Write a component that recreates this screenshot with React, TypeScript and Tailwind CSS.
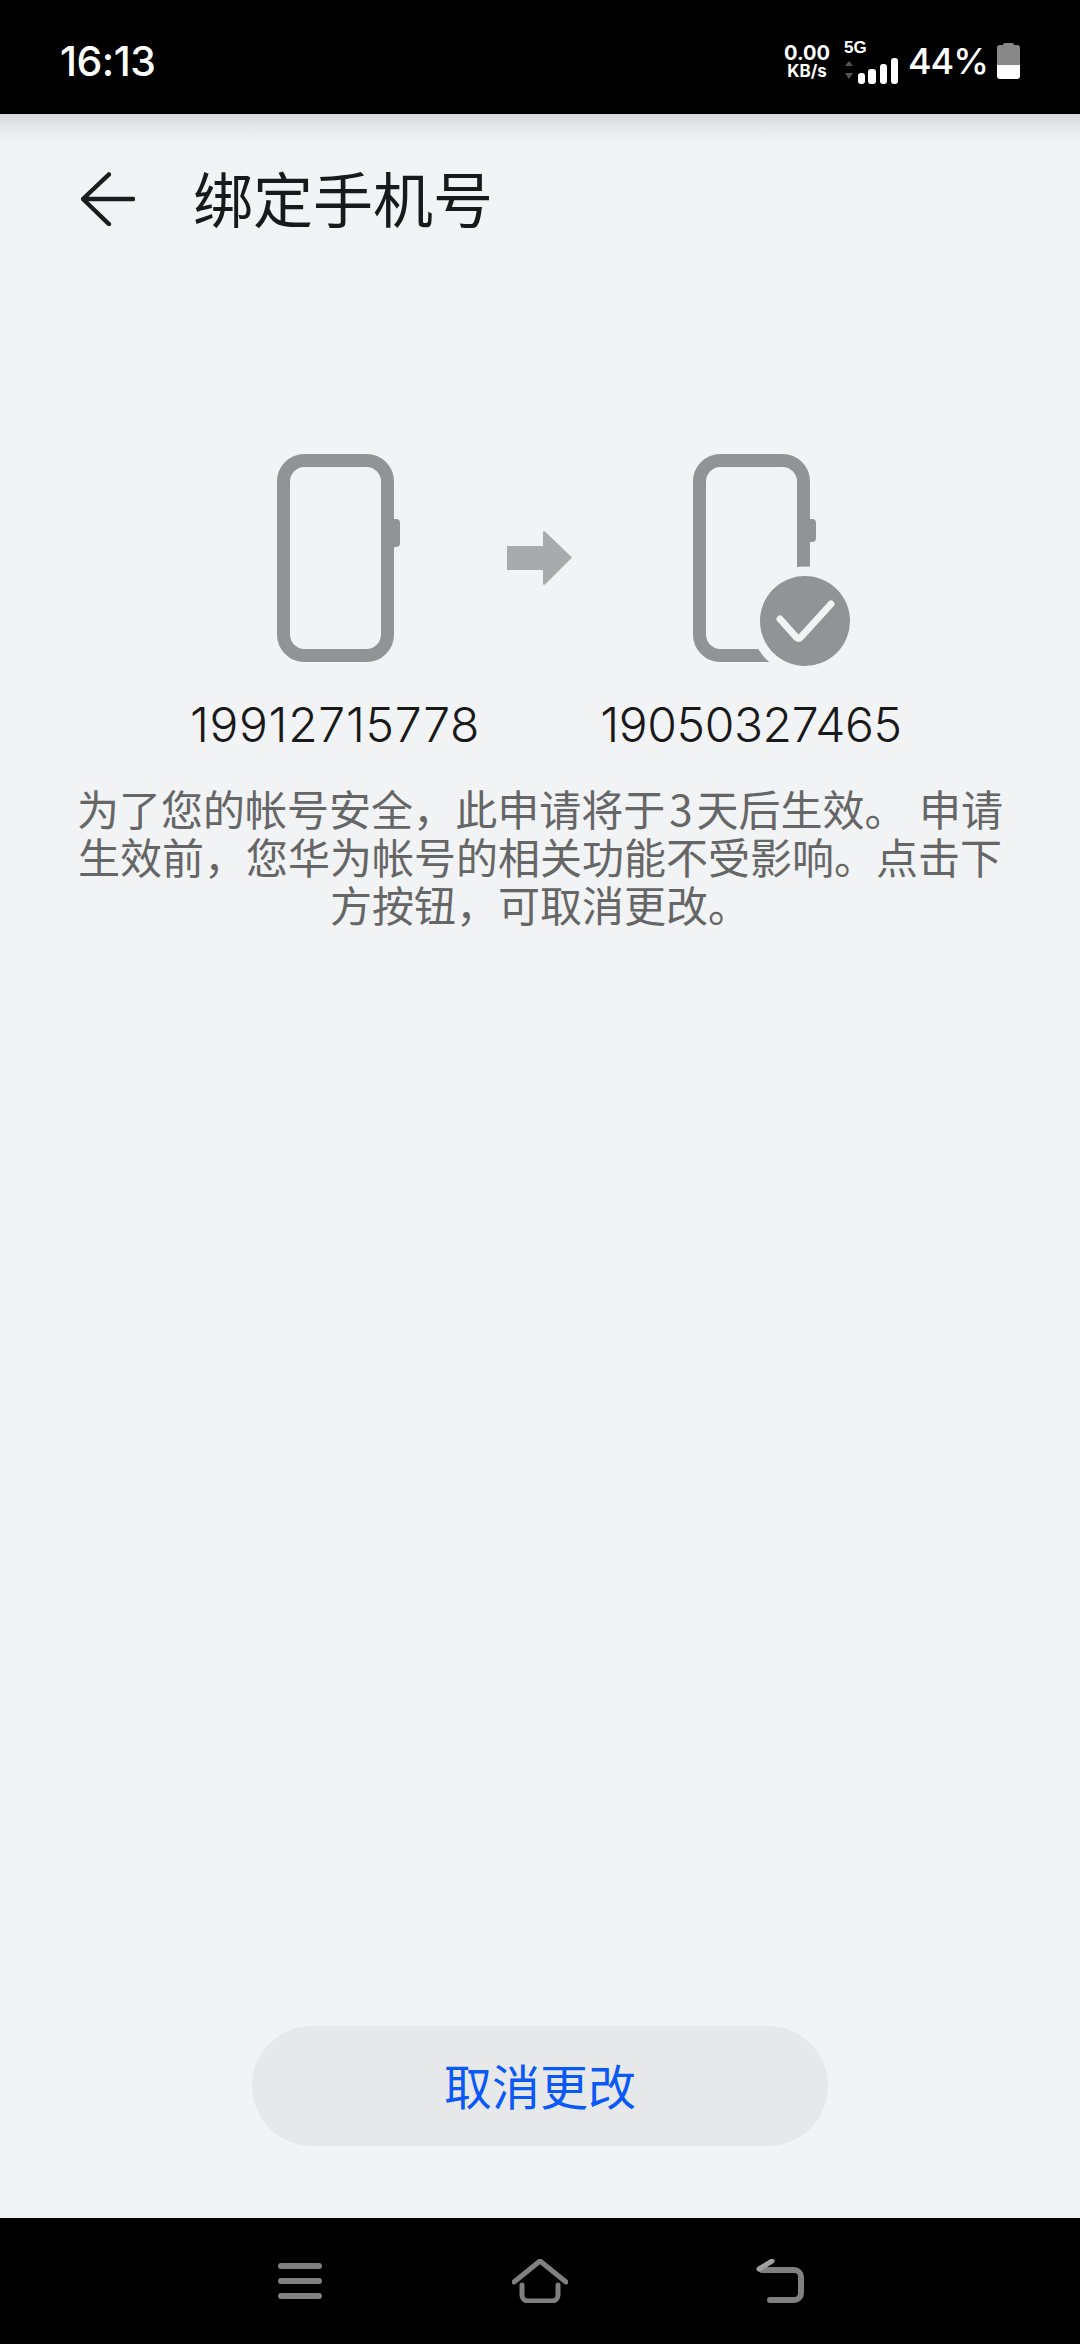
const PhoneIcon = ({ done }: { done?: boolean }) => (
  <svg width="220" height="212" viewBox="0 0 220 212" fill="none">
    <rect x="58.5" y="6.5" width="104" height="195" rx="21" stroke="#929394" strokeWidth="13" />
    {done ? (
      <>
        <path d="M168 65h3a4 4 0 0 1 4 4v15a4 4 0 0 1-4 4h-3z" fill="#929394" />
        <circle cx="164" cy="167" r="54.5" fill="#f1f3f5" />
        <circle cx="164" cy="167" r="45" fill="#929394" />
        <path d="M139 165l16.5 18.5a2.5 2.5 0 0 0 4 0L190 150" stroke="#f1f3f5" strokeWidth="7" strokeLinecap="round" strokeLinejoin="round" />
      </>
    ) : (
      <path d="M168 65h3a4 4 0 0 1 4 4v20a4 4 0 0 1-4 4h-3z" fill="#929394" />
    )}
  </svg>
);

const StatusBar = () => (
  <div className="flex h-[114px] shrink-0 items-center justify-between bg-black pl-[60px] pr-[60px] pt-[8px] text-white font-['Inter',sans-serif]">
    <span className="text-[41px] font-medium leading-none tracking-[-0.5px]">16:13</span>
    <div className="flex items-center">
      <div className="flex w-[48px] flex-col items-center font-bold leading-none">
        <span className="text-[20px] leading-[20px]">0.00</span>
        <span className="text-[17px] leading-[17px]">KB/s</span>
      </div>
      <div className="ml-[13px] flex flex-col">
        <span className="text-[17px] font-bold leading-[20px] font-['Liberation_Sans',sans-serif]">5G</span>
        <svg width="56" height="26" viewBox="0 0 56 26">
          <path d="M1 8l4-5 4 5zM1 15l4 6 4-6z" fill="#555" />
          <rect x="14" y="15" width="7" height="11" rx="3" fill="#fff" />
          <rect x="24" y="11" width="8" height="15" rx="3" fill="#fff" />
          <rect x="36" y="6" width="7" height="20" rx="3" fill="#fff" />
          <rect x="47" y="0" width="7" height="26" rx="3" fill="#fff" />
        </svg>
      </div>
      <span className="ml-[8px] text-[36px] font-medium leading-none tracking-[-1px]">44%</span>
      <svg className="ml-[9px]" width="23" height="36" viewBox="0 0 23 36">
        <path d="M8 0h7a2 2 0 0 1 2 2H6a2 2 0 0 1 2-2zM3 2h17a3 3 0 0 1 3 3v17H0V5a3 3 0 0 1 3-3z" fill="#888" />
        <path d="M0 22h23v11a3 3 0 0 1-3 3H3a3 3 0 0 1-3-3z" fill="#fff" />
      </svg>
    </div>
  </div>
);

const NavBar = () => (
  <div className="flex h-[126px] shrink-0 items-start bg-black pl-[278px] pt-[41px]">
    <svg width="44" height="40" viewBox="0 0 44 40" className="mt-[4px]" fill="none" stroke="#808080" strokeWidth="6" strokeLinecap="round">
      <path d="M3 3h38M3 18h38M3 33h38" />
    </svg>
    <svg width="56" height="44" viewBox="0 0 56 44" className="ml-[190px]" fill="none" stroke="#808080" strokeLinecap="round" strokeLinejoin="round">
      <path d="M2 23L28 2l26 21" strokeWidth="5" />
      <path d="M10 26v10a6 6 0 0 0 6 6h24a6 6 0 0 0 6-6V26" strokeWidth="5" />
    </svg>
    <svg width="48" height="44" viewBox="0 0 48 44" className="ml-[188px]" fill="none" strokeLinecap="round" strokeLinejoin="round">
      <path d="M6 11h32a7 7 0 0 1 7 7v16a7 7 0 0 1-7 7H14" stroke="#808080" strokeWidth="6" />
      <path d="M3 10l13-8" stroke="#a0a0a0" strokeWidth="5" />
    </svg>
  </div>
);

export default function App() {
  return (
    <div className="flex h-[2344px] w-[1080px] flex-col overflow-hidden bg-[#f1f3f5] font-['Noto_Sans_CJK_SC',sans-serif]">
      <StatusBar />
      <main className="flex flex-1 flex-col">
        <header className="flex h-[170px] items-center bg-[linear-gradient(to_bottom,#d8d9db_0px,#eceef0_22px,#f1f3f5_34px)] pl-[81px]">
          <svg width="54" height="54" viewBox="0 0 56 56" fill="none" stroke="#1c1c1c" strokeWidth="4.5" strokeLinecap="round" strokeLinejoin="round">
            <path d="M29 2.5L2 28l27 26M3 28h51" />
          </svg>
          <h1 className="ml-[58px] -translate-y-[2px] text-[60px] font-normal leading-none text-[#191919]">绑定手机号</h1>
        </header>

        <div className="mt-[170px] grid grid-cols-[320px_96px_320px] pl-[175px]">
          <div className="flex justify-center">
            <PhoneIcon />
          </div>
          <div className="flex h-[212px] justify-center pt-[76px]">
            <svg width="66" height="56" viewBox="0 0 66 56" className="-ml-[6px]">
              <path d="M0 16h36V2.5q0-2 2-1L65 27.5l-27 27q-2 1-2-1V40H0z" fill="#a9aaac" />
            </svg>
          </div>
          <div className="flex justify-center">
            <PhoneIcon done />
          </div>
          <p className="mt-[29px] text-center text-[48px] font-light leading-[60px] tracking-[0.7px] text-[#191919] font-['Inter',sans-serif]">19912715778</p>
          <div />
          <p className="mt-[29px] text-center text-[48px] font-light leading-[60px] tracking-[-0.4px] text-[#191919] font-['Inter',sans-serif]">19050327465</p>
        </div>

        <p className="mt-[29px] px-[72px] text-center text-[42px] leading-[48px] text-[#666666]">
          为了您的帐号安全{"\uFF0C"}此申请将于<span className="mx-[4px]">3</span>天后生效。<span className="ml-[3px]"> </span>申请
          <br />
          生效前{"\uFF0C"}您华为帐号的相关功能不受影响。点击下
          <br />
          方按钮{"\uFF0C"}可取消更改。
        </p>

        <div className="mb-[72px] mt-auto flex justify-center">
          <button className="h-[120px] w-[576px] rounded-full bg-[#e7e8ea] pb-[4px] text-[48px] leading-none text-[#0a59f7]">取消更改</button>
        </div>
      </main>
      <NavBar />
    </div>
  );
}
